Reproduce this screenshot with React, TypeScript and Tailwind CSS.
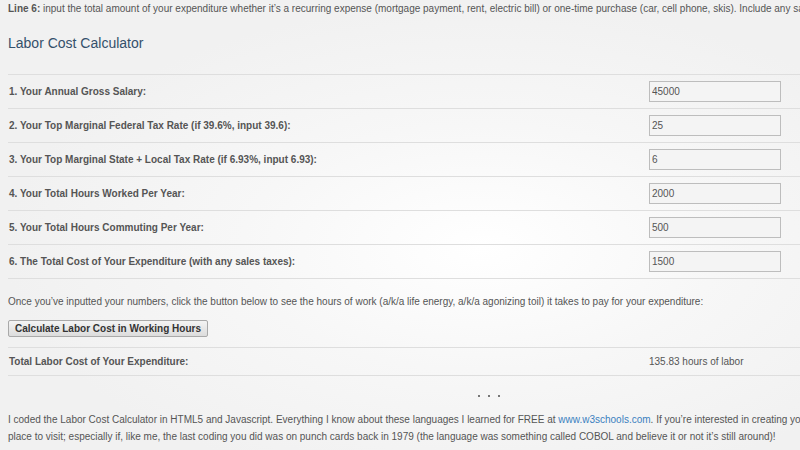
const rows = [
  { label: '1. Your Annual Gross Salary:', value: '45000' },
  { label: '2. Your Top Marginal Federal Tax Rate (if 39.6%, input 39.6):', value: '25' },
  { label: '3. Your Top Marginal State + Local Tax Rate (if 6.93%, input 6.93):', value: '6' },
  { label: '4. Your Total Hours Worked Per Year:', value: '2000' },
  { label: '5. Your Total Hours Commuting Per Year:', value: '500' },
  { label: '6. The Total Cost of Your Expenditure (with any sales taxes):', value: '1500' },
];

export default function App() {
  return (
    <div
      className="w-[800px] h-[450px] overflow-hidden bg-[#f1f1f1] bg-[radial-gradient(ellipse_at_60%_55%,#ffffff_0%,#f7f7f7_35%,#f1f1f1_70%)] text-[10px] leading-[17px] text-[#555]"
      style={{ fontFamily: '"Liberation Sans", Arial, sans-serif' }}
    >
      <div className="w-[1100px] pl-[8px]">
        {/* intro line */}
        <p className="whitespace-nowrap">
          <span className="font-bold">Line 6:</span> input the total amount of your expenditure whether it’s a recurring
          expense (mortgage payment, rent, electric bill) or one-time purchase (car, cell phone, skis). Include any sales
          taxes, shipping and handling.
        </p>

        <h2 className="mt-[16px] text-[14px] leading-[20px] text-[#34506b]">Labor Cost Calculator</h2>

        {/* Calculator table */}
        <div className="mt-[21px] w-[1000px] border-b border-[#dedede]">
          {rows.map((r) => (
            <div key={r.label} className="flex items-center h-[34px] border-t border-[#dedede]">
              <div className="w-[641px] pl-[1px] font-bold">{r.label}</div>
              <input
                defaultValue={r.value}
                className="w-[132px] h-[21px] px-[2px] border border-[#bdbdbd] bg-[#f4f4f4] text-[10px] text-[#555] outline-none"
                style={{ fontFamily: '"Liberation Sans", Arial, sans-serif' }}
              />
            </div>
          ))}
        </div>

        <p className="mt-[14px] whitespace-nowrap">
          Once you’ve inputted your numbers, click the button below to see the hours of work (a/k/a life energy, a/k/a
          agonizing toil) it takes to pay for your expenditure:
        </p>

        <button
          className="mt-[10px] w-[200px] h-[17px] whitespace-nowrap border border-[#a9a9a9] rounded-[2px] bg-gradient-to-b from-[#f4f4f4] to-[#dcdcdc] text-[10px] leading-[15px] font-bold text-[#333]"
          style={{ fontFamily: '"Liberation Sans", Arial, sans-serif' }}
        >
          Calculate Labor Cost in Working Hours
        </button>

        <div className="mt-[10px] w-[1000px] flex items-center h-[29px] border-t border-b border-[#dedede]">
          <div className="w-[641px] pl-[1px] font-bold">Total Labor Cost of Your Expenditure:</div>
          <div>135.83 hours of labor</div>
        </div>

        {/* separator dots */}
        <div className="mt-[19px] w-[784px] flex justify-center gap-[8px] pl-[178px]">
          <span className="w-[2px] h-[2px] bg-[#777]" />
          <span className="w-[2px] h-[2px] bg-[#777]" />
          <span className="w-[2px] h-[2px] bg-[#777]" />
        </div>

        <div className="mt-[14px] w-[1000px]">
          <p className="whitespace-nowrap">
            I coded the Labor Cost Calculator in HTML5 and Javascript. Everything I know about these languages I learned
            for FREE at <a className="text-[#3a7fbf]">www.w3schools.com</a>. If you’re interested in creating your own
            calculator, it’s a great
          </p>
          <p className="whitespace-nowrap">
            place to visit; especially if, like me, the last coding you did was on punch cards back in 1979 (the language
            was something called COBOL and believe it or not it’s still around)!
          </p>
        </div>
      </div>
    </div>
  );
}
